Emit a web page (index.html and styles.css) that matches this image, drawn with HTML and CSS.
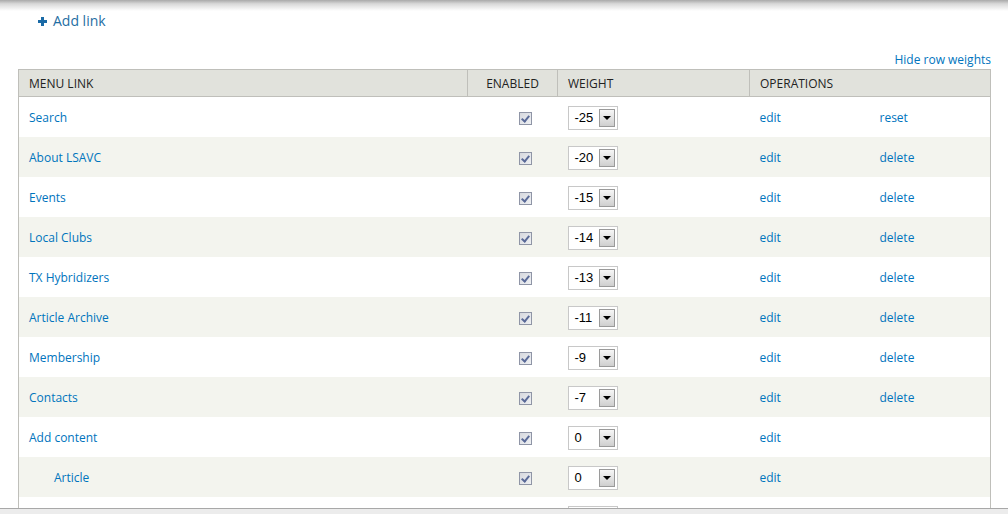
FILE: index.html
```html
<!DOCTYPE html>
<html>
<head>
    <meta charset="UTF-8">
    <title>Menu links</title>
    <link rel="stylesheet" href="styles.css">
</head>
<body>
<div class="top-shade"></div>
<div class="page">
    <ul class="action-links">
        <li><a href="#"><span class="plus"></span>Add link</a></li>
    </ul>
    <div class="weight-toggle"><a href="#">Hide row weights</a></div>
    <table class="menu-table">
        <colgroup>
            <col class="c-link">
            <col class="c-enabled">
            <col class="c-weight">
            <col class="c-op">
            <col>
        </colgroup>
        <thead>
            <tr>
                <th>Menu link</th>
                <th class="center">Enabled</th>
                <th>Weight</th>
                <th colspan="2">Operations</th>
            </tr>
        </thead>
        <tbody>
            <tr>
                <td><a href="#">Search</a></td>
                <td class="chk"><span class="checkbox"></span></td>
                <td><span class="select">-25<span class="drop"></span></span></td>
                <td><a href="#">edit</a></td>
                <td><a href="#">reset</a></td>
            </tr>
            <tr class="even">
                <td><a href="#">About LSAVC</a></td>
                <td class="chk"><span class="checkbox"></span></td>
                <td><span class="select">-20<span class="drop"></span></span></td>
                <td><a href="#">edit</a></td>
                <td><a href="#">delete</a></td>
            </tr>
            <tr>
                <td><a href="#">Events</a></td>
                <td class="chk"><span class="checkbox"></span></td>
                <td><span class="select">-15<span class="drop"></span></span></td>
                <td><a href="#">edit</a></td>
                <td><a href="#">delete</a></td>
            </tr>
            <tr class="even">
                <td><a href="#">Local Clubs</a></td>
                <td class="chk"><span class="checkbox"></span></td>
                <td><span class="select">-14<span class="drop"></span></span></td>
                <td><a href="#">edit</a></td>
                <td><a href="#">delete</a></td>
            </tr>
            <tr>
                <td><a href="#">TX Hybridizers</a></td>
                <td class="chk"><span class="checkbox"></span></td>
                <td><span class="select">-13<span class="drop"></span></span></td>
                <td><a href="#">edit</a></td>
                <td><a href="#">delete</a></td>
            </tr>
            <tr class="even">
                <td><a href="#">Article Archive</a></td>
                <td class="chk"><span class="checkbox"></span></td>
                <td><span class="select">-11<span class="drop"></span></span></td>
                <td><a href="#">edit</a></td>
                <td><a href="#">delete</a></td>
            </tr>
            <tr>
                <td><a href="#">Membership</a></td>
                <td class="chk"><span class="checkbox"></span></td>
                <td><span class="select">-9<span class="drop"></span></span></td>
                <td><a href="#">edit</a></td>
                <td><a href="#">delete</a></td>
            </tr>
            <tr class="even">
                <td><a href="#">Contacts</a></td>
                <td class="chk"><span class="checkbox"></span></td>
                <td><span class="select">-7<span class="drop"></span></span></td>
                <td><a href="#">edit</a></td>
                <td><a href="#">delete</a></td>
            </tr>
            <tr>
                <td><a href="#">Add content</a></td>
                <td class="chk"><span class="checkbox"></span></td>
                <td><span class="select">0<span class="drop"></span></span></td>
                <td><a href="#">edit</a></td>
                <td></td>
            </tr>
            <tr class="even">
                <td><a class="indent" href="#">Article</a></td>
                <td class="chk"><span class="checkbox"></span></td>
                <td><span class="select">0<span class="drop"></span></span></td>
                <td><a href="#">edit</a></td>
                <td></td>
            </tr>
            <tr>
                <td></td>
                <td class="chk"></td>
                <td><span class="select"><span class="drop"></span></span></td>
                <td></td>
                <td></td>
            </tr>
        </tbody>
    </table>
</div>
<div class="bottom-bar"></div>
</body>
</html>
```

FILE: styles.css
```css
html,body{
    margin: 0;
    padding: 0;
}
body{
    background: #fff;
    font-family: "Open Sans", "DejaVu Sans", sans-serif;
    font-size: 12px;
    color: #333;
    overflow: hidden;
}
a{
    color: #0074bd;
    text-decoration: none;
}

.top-shade{
    position: fixed;
    top: 0;
    left: 0;
    width: 100%;
    height: 11px;
    background: linear-gradient(to bottom, #a9a9a9, #d8d8d8 35%, rgba(255,255,255,0));
    z-index: 2;
}
.bottom-bar{
    position: fixed;
    left: 0;
    bottom: 0;
    width: 100%;
    height: 5px;
    border-top: 1px solid #a8a8a8;
    background: #ececec;
    z-index: 2;
}

.page{
    padding: 0 17px 0 18px;
}

.action-links{
    list-style: none;
    margin: 0;
    padding: 11px 0 0 20px;
    height: 29px;
}
.action-links a{
    display: inline-flex;
    align-items: center;
    font-size: 14px;
    line-height: 20px;
    color: #1f6ea3;
}
.plus{
    position: relative;
    display: inline-block;
    width: 9px;
    height: 9px;
    margin-right: 6px;
}
.plus::before,
.plus::after{
    content: "";
    position: absolute;
    background: #1a6aa6;
}
.plus::before{
    left: 0;
    top: 3px;
    width: 9px;
    height: 3px;
}
.plus::after{
    left: 3px;
    top: 0;
    width: 3px;
    height: 9px;
}

.weight-toggle{
    text-align: right;
    padding-top: 10px;
    height: 19px;
    line-height: 19px;
}

.menu-table{
    width: 100%;
    border-collapse: collapse;
    table-layout: fixed;
    border-left: 1px solid #bfbfba;
    border-right: 1px solid #bfbfba;
}
.c-link{ width: 449px; }
.c-enabled{ width: 90px; }
.c-weight{ width: 192px; }
.c-op{ width: 120px; }

.menu-table th{
    background: #e1e2dc;
    border: 1px solid #bfbfba;
    height: 26px;
    padding: 0 10px;
    font-weight: normal;
    text-transform: uppercase;
    text-align: left;
    color: #222;
}
.menu-table th.center{
    text-align: center;
}
.menu-table td{
    height: 40px;
    padding: 0 10px;
    vertical-align: middle;
    white-space: nowrap;
}
.menu-table tr.even td{
    background: #f3f4ee;
}
.indent{
    margin-left: 25px;
}

.chk{
    padding-left: 51px !important;
}
.checkbox{
    display: block;
    width: 11px;
    height: 11px;
    margin-top: 2px;
    border: 1px solid #8f95a6;
    background: linear-gradient(135deg, #d6d8de, #eef0f3) center / 100% 100% no-repeat;
    position: relative;
}
.checkbox::after{
    content: "";
    position: absolute;
    left: 3px;
    top: 1px;
    width: 3px;
    height: 6px;
    border-right: 2px solid #5a6a98;
    border-bottom: 2px solid #5a6a98;
    transform: rotate(40deg);
}

.select{
    display: flex;
    align-items: center;
    justify-content: space-between;
    box-sizing: border-box;
    width: 50px;
    height: 24px;
    margin-top: 1px;
    padding: 0 2px 0 6px;
    border: 1px solid #c8c8c8;
    background: #fff;
    font-family: "Liberation Sans", Arial, sans-serif;
    font-size: 13px;
    color: #000;
}
.drop{
    position: relative;
    box-sizing: border-box;
    width: 16px;
    height: 18px;
    margin-left: auto;
    border: 1px solid #9a9a9a;
    background: linear-gradient(to bottom, #f6f6f6, #cfcfcf);
}
.drop::after{
    content: "";
    position: absolute;
    left: 3px;
    top: 6px;
    border-left: 4px solid transparent;
    border-right: 4px solid transparent;
    border-top: 4px solid #000;
}
```
